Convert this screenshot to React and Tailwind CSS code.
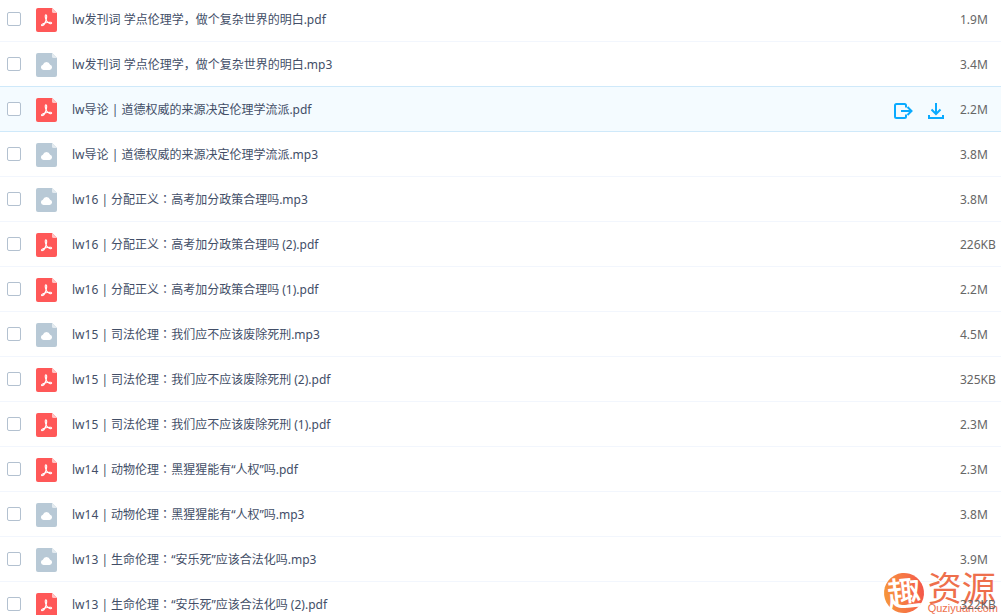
import { Fragment } from "react";

const files = [
  { name: "lw发刊词 学点伦理学，做个复杂世界的明白.pdf", size: "1.9M" },
  { name: "lw发刊词 学点伦理学，做个复杂世界的明白.mp3", size: "3.4M" },
  { name: "lw导论 | 道德权威的来源决定伦理学流派.pdf", size: "2.2M", active: true },
  { name: "lw导论 | 道德权威的来源决定伦理学流派.mp3", size: "3.8M" },
  { name: "lw16 | 分配正义：高考加分政策合理吗.mp3", size: "3.8M" },
  { name: "lw16 | 分配正义：高考加分政策合理吗 (2).pdf", size: "226KB" },
  { name: "lw16 | 分配正义：高考加分政策合理吗 (1).pdf", size: "2.2M" },
  { name: "lw15 | 司法伦理：我们应不应该废除死刑.mp3", size: "4.5M" },
  { name: "lw15 | 司法伦理：我们应不应该废除死刑 (2).pdf", size: "325KB" },
  { name: "lw15 | 司法伦理：我们应不应该废除死刑 (1).pdf", size: "2.3M" },
  { name: "lw14 | 动物伦理：黑猩猩能有“人权”吗.pdf", size: "2.3M" },
  { name: "lw14 | 动物伦理：黑猩猩能有“人权”吗.mp3", size: "3.8M" },
  { name: "lw13 | 生命伦理：“安乐死”应该合法化吗.mp3", size: "3.9M" },
  { name: "lw13 | 生命伦理：“安乐死”应该合法化吗 (2).pdf", size: "322KB" },
];

function PdfIcon() {
  return (
    <svg className="h-6 w-[21px] shrink-0" viewBox="0 0 21 24" fill="none" aria-hidden="true">
      <path d="M2 0H16L21 5V22a2 2 0 0 1-2 2H2a2 2 0 0 1-2-2V2a2 2 0 0 1 2-2Z" fill="#ff5858" />
      <path d="M16 0L21 5H17.5A1.5 1.5 0 0 1 16 3.5Z" fill="#ffc4c4" />
      <path
        d="M9.8 6.800c1.200 0 1 2 .5 4.600-.8 3-2.800 6.300-4.200 6.300-1.300-.3-.2-1.700 2-2.400 2.600-.9 5.200-1.300 6.600-1 1.600.4.9 1.700-.5 1.300-2.100-.6-4.200-3-4.700-5.500-.3-1.500-.5-3.300.3-3.300Z"
        stroke="#fff"
        strokeWidth="1.100"
        strokeLinejoin="round"
      />
    </svg>
  );
}

function AudioIcon() {
  return (
    <svg className="h-6 w-[21px] shrink-0" viewBox="0 0 21 24" aria-hidden="true">
      <path d="M2 0H16L21 5V22a2 2 0 0 1-2 2H2a2 2 0 0 1-2-2V2a2 2 0 0 1 2-2Z" fill="#b8c9d6" />
      <path d="M16 0L21 5H17.5A1.5 1.5 0 0 1 16 3.5Z" fill="#e4ebf0" />
      <path d="M7.500 17a2.700 2.700 0 0 1-.6-5.300 3.800 3.800 0 0 1 7.200 0A2.700 2.700 0 0 1 13.500 17Z" fill="#fff" />
    </svg>
  );
}

function ShareIcon() {
  return (
    <svg className="h-4 w-[19px]" viewBox="0 0 19 16" fill="none" stroke="#09aaff" strokeWidth="2" aria-hidden="true">
      <path d="M12 4.500V2.500A1.500 1.500 0 0 0 10.500 1h-8A1.500 1.500 0 0 0 1 2.500v11A1.500 1.500 0 0 0 2.500 15h8a1.500 1.500 0 0 0 1.500-1.500V11.500" />
      <path d="M7 8h10.500M13.500 4l4 4-4 4" />
    </svg>
  );
}

function DownloadIcon() {
  return (
    <svg className="h-4 w-4" viewBox="0 0 16 16" fill="none" stroke="#09aaff" strokeWidth="2" aria-hidden="true">
      <path d="M8 0v10.500M3.500 6.500 8 11l4.500-4.500M1 12v3h14v-3" />
    </svg>
  );
}

// Full-width colons sit in the middle of their box
function FileName({ name }) {
  return name.split("：").map((part, i) => (
    <Fragment key={i}>
      {i > 0 && <span className="font-['Noto_Sans_CJK_JP',sans-serif] leading-none">：</span>}
      {part}
    </Fragment>
  ));
}

function FileRow({ file, index }) {
  const id = `file-${index}`;
  return (
    <li
      className={`flex h-[45px] items-center border-b pl-[7px] ${
        file.active ? "border-[#cfe9fa] bg-[#f4fbff] shadow-[0_-1px_0_#cfe9fa]" : "border-[#f2f6fd]"
      }`}
    >
      <input
        id={id}
        type="checkbox"
        className="size-3.5 shrink-0 appearance-none rounded-xs border border-[#b3c1d0] bg-white checked:bg-[#09aaff]"
      />
      <div className="mt-0.5 ml-[15px] flex">{file.name.endsWith(".pdf") ? <PdfIcon /> : <AudioIcon />}</div>
      <label htmlFor={id} className="ml-[15px] min-w-0 flex-1 truncate pt-0.5 text-[#424e67]">
        <FileName name={file.name} />
      </label>
      {file.active && (
        <div className="mt-1 mr-4 flex gap-[15px]">
          <button type="button" aria-label="分享">
            <ShareIcon />
          </button>
          <button type="button" aria-label="下载">
            <DownloadIcon />
          </button>
        </div>
      )}
      <span className="relative z-10 w-[41px] shrink-0 pt-0.5 text-[#666]">{file.size}</span>
    </li>
  );
}

function Watermark() {
  return (
    <div className="pointer-events-none absolute right-[3px] bottom-0.5 flex items-center gap-1">
      <div className="flex size-10 -rotate-6 items-center justify-center rounded-full bg-linear-to-r from-[#f6953a] to-[#f4574a] text-[34px] leading-none font-medium text-white">
        趣
      </div>
      <div className="text-[#ee6f4c]">
        <div className="text-[34px] leading-[30px]">资源</div>
        <div className="font-['Liberation_Sans',sans-serif] text-[11px] leading-[10px]">Quziyuan.com</div>
      </div>
    </div>
  );
}

export default function App() {
  return (
    <main className="relative h-screen overflow-hidden bg-white font-['Noto_Sans','Noto_Sans_CJK_SC',sans-serif] text-xs">
      <ul className="-mt-[3px]">
        {files.map((file, i) => (
          <FileRow key={file.name} file={file} index={i} />
        ))}
      </ul>
      <Watermark />
    </main>
  );
}
